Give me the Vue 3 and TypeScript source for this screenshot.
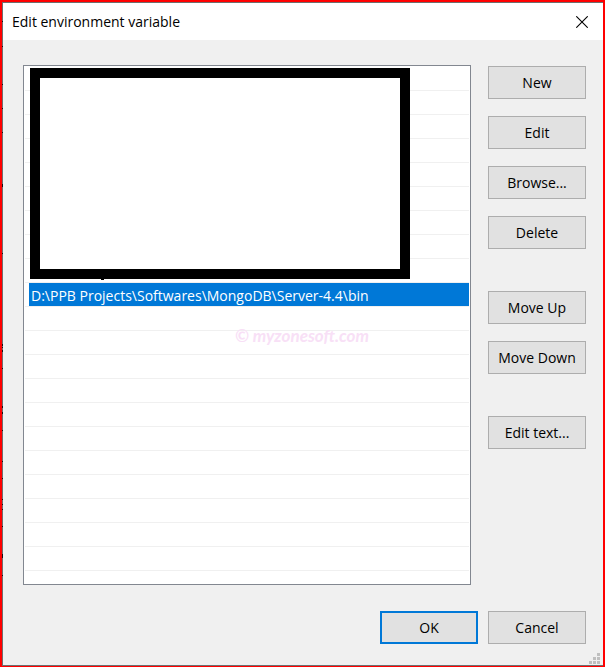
<script setup lang="ts">
import { ref } from 'vue'

interface Entry {
  id: number
  text: string
}

const ROW_COUNT = 21
const selected = ref(9)

const entries: Entry[] = Array.from({ length: ROW_COUNT }, (_, id) => ({
  id,
  text: id === 9 ? 'D:\\PPB Projects\\Softwares\\MongoDB\\Server-4.4\\bin' : '',
}))

const actionGroups: string[][] = [
  ['New', 'Edit', 'Browse...', 'Delete'],
  ['Move Up', 'Move Down'],
  ['Edit text...'],
]

// Specks of the window behind, seen along the left edge: [top, height]
const specks: [number, number][] = [
  [21, 1], [46, 1], [84, 1], [108, 1], [132, 1], [184, 3], [253, 1],
  [344, 2], [347, 1], [350, 2], [368, 1], [406, 2], [412, 2], [430, 1],
  [461, 1], [478, 1], [499, 1], [504, 1], [509, 1], [526, 1], [554, 4], [575, 1],
]
</script>

<template>
  <div class="frame">
    <main class="dialog" role="dialog" aria-labelledby="dialog-title">
      <header class="titlebar">
        <h1 id="dialog-title">Edit environment variable</h1>
        <button class="close" type="button" aria-label="Close">
          <svg width="12" height="12" viewBox="0 0 12 12" aria-hidden="true">
            <path d="M0.3 0.3L11.7 11.7M11.7 0.3L0.3 11.7" stroke="#000" stroke-width="1.1" fill="none" />
          </svg>
        </button>
      </header>

      <div class="content">
        <div class="list-box">
          <ul class="list" role="listbox" aria-label="Values">
            <li
              v-for="entry in entries"
              :key="entry.id"
              class="row"
              role="option"
              :aria-selected="entry.id === selected"
            >
              <span :class="['value', { selected: entry.id === selected }]">{{ entry.text }}</span>
            </li>
          </ul>
          <div class="cover"></div>
          <span class="watermark">© myzonesoft.com</span>
        </div>

        <div class="actions">
          <div v-for="(group, i) in actionGroups" :key="i" class="group">
            <button v-for="label in group" :key="label" class="btn" type="button">{{ label }}</button>
          </div>
        </div>
      </div>

      <footer class="footer">
        <button class="btn primary" type="button">OK</button>
        <button class="btn" type="button">Cancel</button>
      </footer>

      <svg class="grip" width="11" height="11" viewBox="0 0 11 11" fill="#bfbfbf" aria-hidden="true">
        <path d="M8 0h3v3h-3zM4 4h3v3h-3zM8 4h3v3h-3zM0 8h3v3h-3zM4 8h3v3h-3zM8 8h3v3h-3z" />
      </svg>
    </main>
    <svg class="specks" width="1" height="600" viewBox="0 0 1 600" fill="#101418" aria-hidden="true">
      <rect v-for="[top, height] in specks" :key="top" x="0" :y="top" width="1" :height="height" />
    </svg>
  </div>
</template>

<style>
body {
  margin: 0;
}
</style>

<style scoped>
* {
  box-sizing: border-box;
}

.frame {
  position: relative;
  display: flex;
  min-height: 100vh;
  border: 2px solid #ff0000;
  border-bottom-width: 1px;
  font-family: "Open Sans", "Noto Sans", sans-serif;
  font-size: 14px;
  line-height: 20px;
  color: #000;
}

.dialog {
  position: relative;
  flex: 1;
  min-width: 0;
  display: flex;
  flex-direction: column;
  border: 1px solid #6e6e6e;
  border-right: 0;
  background: #f0f0f0;
}

.titlebar {
  display: flex;
  align-items: center;
  justify-content: space-between;
  height: 37px;
  padding: 0 15px 0 9px;
  background: #fff;
}

h1 {
  margin: 0;
  font-size: 14px;
  font-weight: 400;
}

.close {
  display: flex;
  padding: 0;
  border: 0;
  background: none;
}

.content {
  display: flex;
  gap: 17px;
  padding: 25px 17px 0 20px;
}

.list-box {
  position: relative;
  flex: 1;
  min-width: 0;
  padding: 1px 1px 13px;
  border: 1px solid #828790;
  background: #fff;
}

.list {
  margin: 0;
  padding: 0;
  list-style: none;
}

.row {
  display: flex;
  height: 24px;
  padding-left: 4px;
  border-bottom: 1px solid #f0f0f0;
}

.value {
  flex: 1;
  padding: 0 2px;
  line-height: 26px;
  white-space: nowrap;
}

.selected {
  background: #0078d7;
  color: #fff;
}

.cover {
  position: absolute;
  top: 2px;
  left: 6px;
  right: 60px;
  height: 211px;
  border: 10px solid #000;
  background: #fff;
}

.cover::after {
  content: "";
  position: absolute;
  top: 201px;
  left: 61px;
  width: 3px;
  height: 1px;
  background: #000;
}

.watermark {
  position: absolute;
  top: 258px;
  left: 211px;
  font-family: "Lato", sans-serif;
  font-size: 17px;
  font-style: italic;
  font-weight: 700;
  line-height: 24px;
  white-space: nowrap;
  color: #f8e0f6;
}

.actions {
  display: flex;
  flex-direction: column;
  gap: 42px;
  padding-top: 1px;
}

.group {
  display: flex;
  flex-direction: column;
  gap: 17px;
}

.btn {
  width: 98px;
  height: 33px;
  padding: 0;
  border: 1px solid #adadad;
  background: #e1e1e1;
  color: #000;
  font: inherit;
}

.primary {
  border: 2px solid #0078d7;
}

.footer {
  display: flex;
  justify-content: flex-end;
  gap: 10px;
  padding: 26px 17px 21px;
}

.grip {
  position: absolute;
  right: 3px;
  bottom: 1px;
}

.specks {
  position: absolute;
  top: -2px;
  left: 0;
}
</style>
